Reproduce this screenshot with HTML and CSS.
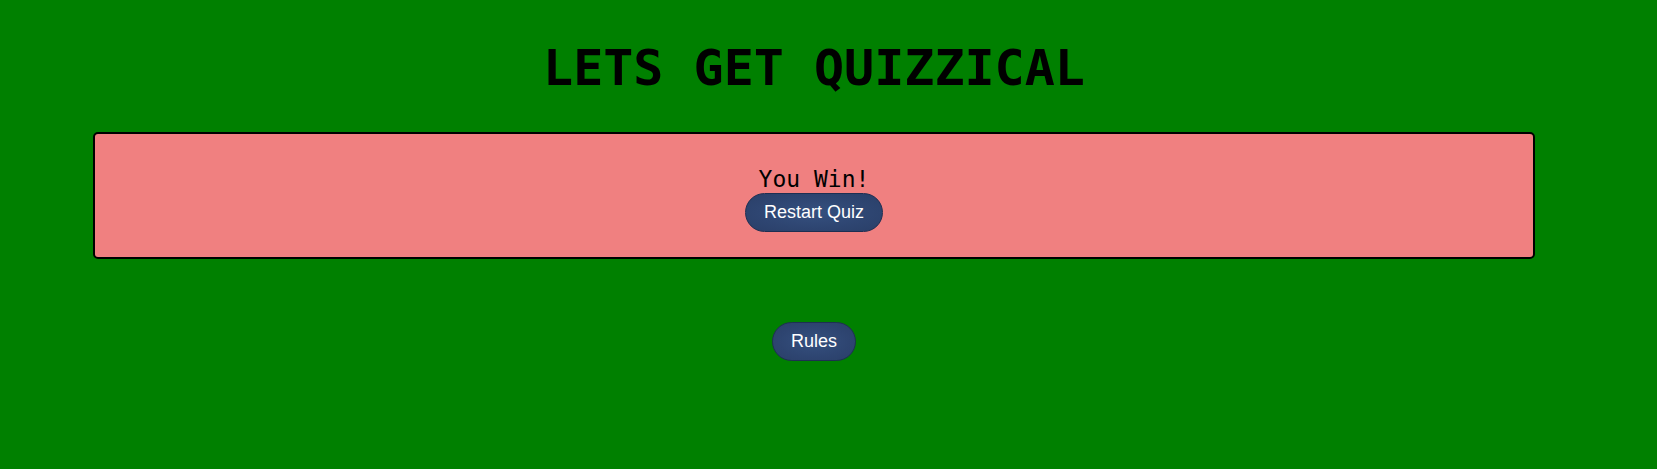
FILE: index.html
```html
<!DOCTYPE html>
<html>
<head>
<meta charset="utf-8">
<link rel="stylesheet" href="styles.css">
</head>
<body>
<main class="app">
  <h1 class="title">LETS GET QUIZZICAL</h1>
  <section class="card">
    <p class="result">You Win!</p>
    <button class="btn">Restart Quiz</button>
  </section>
  <div class="rules-row">
    <button class="btn">Rules</button>
  </div>
</main>
</body>
</html>
```

FILE: styles.css
```css
html, body {
  margin: 0;
  padding: 0;
  background: #008000;
  height: 100%;
}
.app {
  width: 1442px;
  margin-left: 93px;
  display: flex;
  flex-direction: column;
  align-items: center;
}
.title {
  margin: 36px 0 0 0;
  height: 96px;
  font-family: "DejaVu Sans Mono", "Liberation Mono", monospace;
  font-weight: bold;
  font-size: 50px;
  line-height: 64px;
  color: #000;
  letter-spacing: 0;
}
.card {
  box-sizing: border-box;
  width: 100%;
  height: 127px;
  background: #f08080;
  border: 2px solid #000;
  border-radius: 5px;
  display: flex;
  flex-direction: column;
  align-items: center;
  justify-content: center;
  padding-top: 5px;
}
.result {
  margin: 0;
  font-family: "DejaVu Sans Mono", "Liberation Mono", monospace;
  font-size: 23px;
  line-height: 28px;
  color: #000;
}
.btn {
  box-sizing: border-box;
  height: 39px;
  padding: 0 18px;
  border-radius: 20px;
  border: 1px solid #1e2f52;
  background: radial-gradient(ellipse at center, #35507f 0%, #2e4571 60%, #2a3f68 100%);
  color: #fff;
  font-family: "Liberation Sans", Arial, sans-serif;
  font-size: 18px;
}
.rules-row {
  margin-top: 63px;
  display: flex;
  justify-content: center;
}
```
